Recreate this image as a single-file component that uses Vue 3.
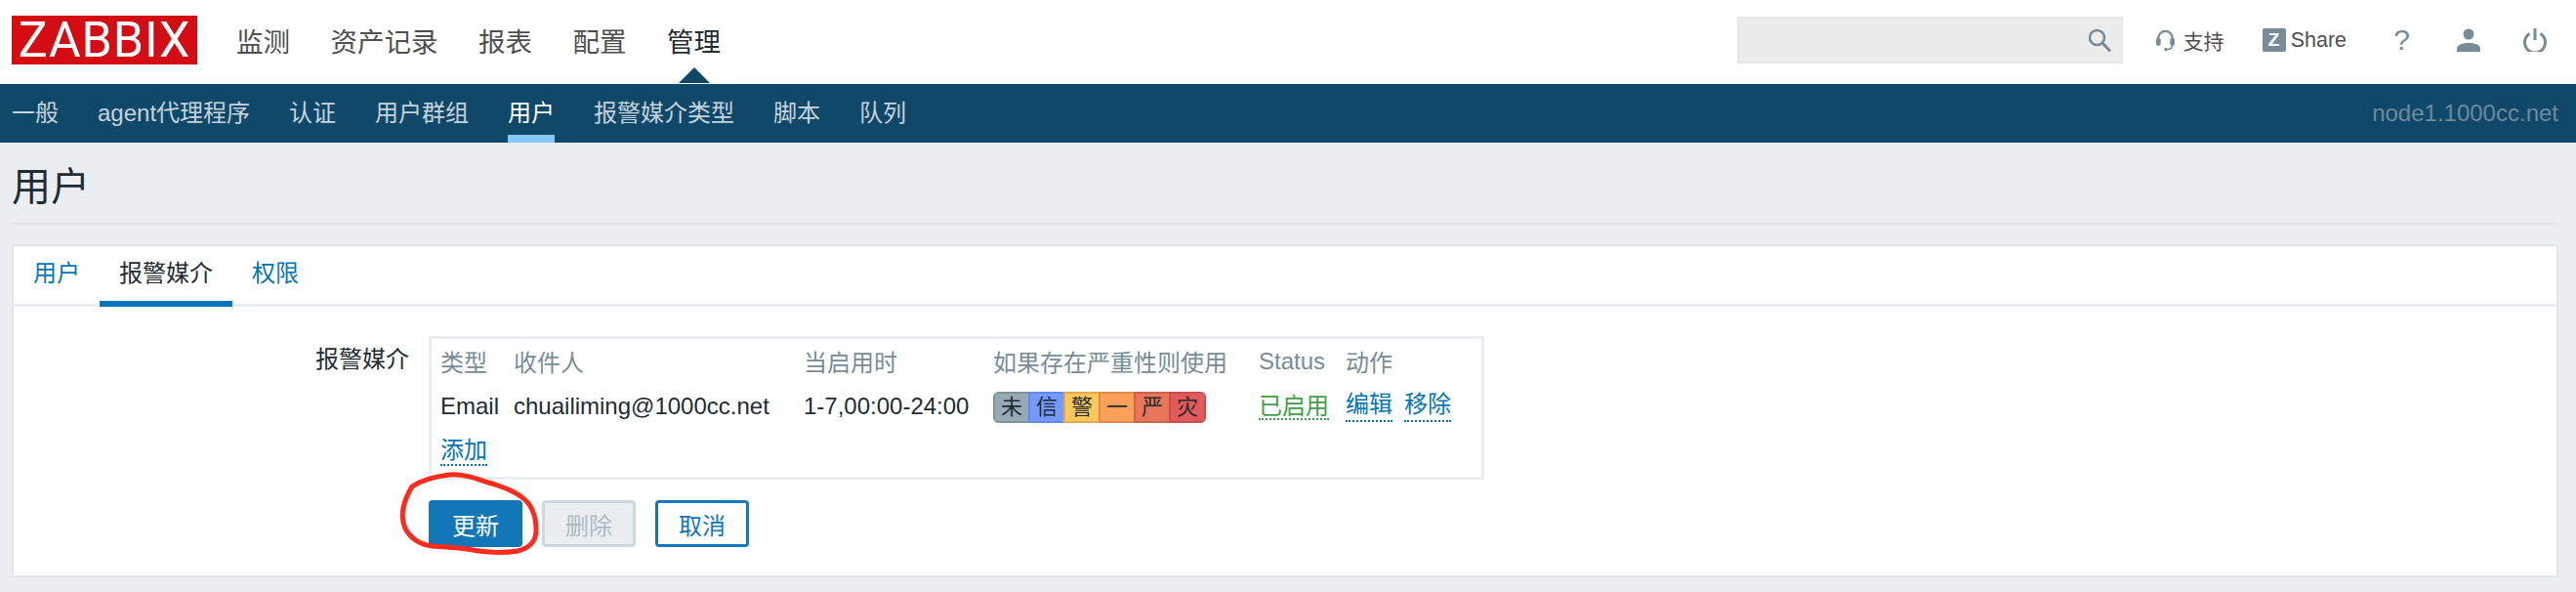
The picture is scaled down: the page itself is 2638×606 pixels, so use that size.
<template>
  <div class="page">
    <header class="top">
      <a class="logo">ZABBIX</a>
      <nav class="main-nav">
        <a v-for="item in mainNav" :key="item" :class="{ active: item === '管理' }">{{ item }}</a>
      </nav>
      <div class="tools">
        <div class="search">
          <svg class="search-icon" viewBox="0 0 24 24" width="24" height="24">
            <circle cx="9.5" cy="9.5" r="7.5" fill="none" stroke="#768d99" stroke-width="2.6" />
            <path d="M15 15l8 8.5" stroke="#768d99" stroke-width="3" fill="none" />
          </svg>
        </div>
        <a class="tool support">
          <svg viewBox="0 0 22 24" width="21" height="24">
            <path d="M3.5 14V10a7.5 7.5 0 0 1 15 0v4" fill="none" stroke="#768d99" stroke-width="2.4" />
            <rect x="1" y="10" width="5" height="8" rx="2" fill="#768d99" />
            <rect x="16" y="10" width="5" height="8" rx="2" fill="#768d99" />
            <path d="M18.5 17c0 3.5-2.5 5-6 5.200" fill="none" stroke="#768d99" stroke-width="1.800" />
            <circle cx="11.500" cy="22" r="1.800" fill="#768d99" />
          </svg>
          <span>支持</span>
        </a>
        <a class="tool share"><span class="z-icon">Z</span><span>Share</span></a>
        <a class="tool help">?</a>
        <a class="tool profile">
          <svg viewBox="0 0 24 24" width="24" height="24">
            <circle cx="12" cy="6" r="5.500" fill="#768d99" />
            <path d="M0 24v-3c0-4 5-6 12-6s12 2 12 6v3z" fill="#768d99" />
          </svg>
        </a>
        <a class="tool power">
          <svg viewBox="0 0 24 24" width="24" height="24">
            <path d="M6.500 5.500a10.500 10.500 0 1 0 11 0" fill="none" stroke="#768d99" stroke-width="3" />
            <path d="M12 0v12" stroke="#768d99" stroke-width="3" />
          </svg>
        </a>
      </div>
    </header>

    <nav class="sub-nav">
      <a v-for="item in subNav" :key="item" :class="{ active: item === '用户' }">{{ item }}</a>
      <span class="server">node1.1000cc.net</span>
    </nav>

    <main class="content">
      <h1 class="title">用户</h1>
      <section class="card">
        <div class="tabs">
          <a>用户</a>
          <a class="active">报警媒介</a>
          <a>权限</a>
        </div>
        <div class="form">
          <label class="form-label">报警媒介</label>
          <div class="form-field">
            <div class="media-box">
              <table class="media-table">
                <thead>
                  <tr>
                    <th class="col-type">类型</th>
                    <th class="col-to">收件人</th>
                    <th class="col-when">当启用时</th>
                    <th class="col-sev">如果存在严重性则使用</th>
                    <th class="col-status">Status</th>
                    <th>动作</th>
                  </tr>
                </thead>
                <tbody>
                  <tr class="media-row">
                    <td>Email</td>
                    <td>chuailiming@1000cc.net</td>
                    <td>1-7,00:00-24:00</td>
                    <td class="sev-cell">
                      <div class="severity">
                        <span v-for="s in severities" :key="s.label" :class="s.cls">{{ s.label }}</span>
                      </div>
                    </td>
                    <td><a class="dotted green">已启用</a></td>
                    <td class="actions"><a class="dotted">编辑</a><a class="dotted">移除</a></td>
                  </tr>
                  <tr>
                    <td colspan="6"><a class="dotted">添加</a></td>
                  </tr>
                </tbody>
              </table>
            </div>
            <div class="buttons">
              <button class="btn primary">更新</button>
              <button class="btn disabled">删除</button>
              <button class="btn outline">取消</button>
            </div>
          </div>
        </div>
      </section>
    </main>

    <svg class="scribble" viewBox="0 0 2638 606" width="2638" height="606">
      <path
        d="M422 498C431 492 444 488 460 486C476 485 488 490 500 494C515 498 528 503 537 511C545 518 549 530 549 543C549 553 543 561 530 564C518 566 505 566 490 564C475 561 460 560 442 559C428 557 420 550 415 541C411 532 412 520 416 510C418 505 420 501 422 498Z"
        fill="none"
        stroke="#fb2b1e"
        stroke-width="5"
      />
    </svg>
  </div>
</template>

<script setup>
const mainNav = ['监测', '资产记录', '报表', '配置', '管理']
const subNav = ['一般', 'agent代理程序', '认证', '用户群组', '用户', '报警媒介类型', '脚本', '队列']
const severities = [
  { label: '未', cls: 'sev-na' },
  { label: '信', cls: 'sev-info' },
  { label: '警', cls: 'sev-warn' },
  { label: '一', cls: 'sev-avg' },
  { label: '严', cls: 'sev-high' },
  { label: '灾', cls: 'sev-dis' }
]
</script>

<style>
html,
body {
  background: #ebeef0;
}
</style>

<style scoped>
.page {
  position: relative;
  width: 2638px;
  height: 606px;
  overflow: hidden;
  background: #ebeef0;
  color: #1f2c33;
  font-family: "Liberation Sans", "Noto Sans CJK SC", sans-serif;
  font-size: 24px;
}

.top {
  display: flex;
  align-items: center;
  height: 86px;
  padding: 0 30px 4px 12px;
  box-sizing: border-box;
  background: #fff;
}

.logo {
  width: 190px;
  height: 50px;
  background: #d40c13;
  color: #fff;
  font-family: Roboto, "Liberation Sans", sans-serif;
  font-size: 50px;
  letter-spacing: 1px;
  line-height: 50px;
  text-align: center;
}

.main-nav {
  display: flex;
  gap: 41.500px;
  margin-left: 40px;
  font-size: 27.500px;
  color: #4f4f4f;
}

.main-nav a {
  position: relative;
}

.main-nav .active {
  color: #1f2c33;
}

.main-nav .active::after {
  content: "";
  position: absolute;
  left: 12px;
  top: 48px;
  border-left: 16px solid transparent;
  border-right: 16px solid transparent;
  border-bottom: 16px solid #10486a;
}

.tools {
  display: flex;
  align-items: center;
  margin-left: auto;
  font-size: 21px;
  color: #4f4f4f;
}

.tool {
  display: flex;
  align-items: center;
  height: 24px;
}

.search {
  display: flex;
  align-items: center;
  justify-content: flex-end;
  width: 395px;
  height: 48px;
  box-sizing: border-box;
  padding-right: 10px;
  background: #ececec;
  border: 2px solid #e6e6e6;
}

.support {
  gap: 8px;
  margin-left: 33px;
}

.share {
  gap: 5px;
  margin-left: 39px;
  font-size: 21.500px;
}

.z-icon {
  width: 24px;
  height: 24px;
  border-radius: 2px;
  background: #768d99;
  color: #fff;
  font-size: 19px;
  font-weight: 700;
  line-height: 24px;
  text-align: center;
}

.help {
  justify-content: center;
  width: 13px;
  margin-left: 50px;
  color: #768d99;
  font-size: 30px;
}

.profile {
  margin-left: 50px;
}

.power {
  margin-left: 44px;
}

.sub-nav {
  display: flex;
  gap: 40px;
  height: 60px;
  padding: 0 18px 0 12px;
  background: #10486a;
  color: #c5d3db;
  line-height: 60px;
}

.sub-nav a {
  height: 60px;
  box-sizing: border-box;
}

.sub-nav .active {
  color: #fff;
  border-bottom: 8px solid #84c8f4;
}

.server {
  margin-left: auto;
  color: #6e8a9a;
}

.content {
  padding: 0 18px 15px 12px;
}

.title {
  height: 84px;
  margin: 0;
  box-sizing: border-box;
  border-bottom: 2px solid #dfe3e5;
  font-size: 40px;
  font-weight: 400;
  line-height: 54px;
  padding-top: 18px;
}

.card {
  height: 341px;
  box-sizing: border-box;
  margin-top: 20px;
  background: #fff;
  border: 2px solid #e3e6e8;
}

.tabs {
  display: flex;
  height: 62px;
  box-sizing: border-box;
  border-bottom: 3px solid #ebeef0;
  color: #0275b8;
}

.tabs a {
  height: 62px;
  padding: 0 20px;
  box-sizing: border-box;
  line-height: 56px;
}

.tabs .active {
  color: #1f2c33;
  border-bottom: 6px solid #0275b8;
}

.form {
  display: grid;
  grid-template-columns: 405px 1fr;
  column-gap: 20px;
  padding-top: 30px;
}

.form-label {
  padding-top: 10px;
  text-align: right;
  line-height: 28px;
}

.media-box {
  width: 1081px;
  height: 147px;
  box-sizing: border-box;
  padding: 2px 0 0 9px;
  border: 3px solid #ebeef0;
}

.media-table {
  border-collapse: collapse;
  table-layout: fixed;
}

.media-table th,
.media-table td {
  height: 45px;
  padding: 0;
  font-weight: 400;
  text-align: left;
  white-space: nowrap;
  vertical-align: middle;
}

.media-table th {
  padding-bottom: 4px;
  height: 41px;
  color: #768d99;
}

.media-table .media-row td {
  height: 43px;
  padding-bottom: 2px;
}

.media-table .media-row .sev-cell {
  height: 45px;
  padding-bottom: 0;
}

.col-type {
  width: 75px;
}

.col-to {
  width: 297px;
}

.col-when {
  width: 194px;
}

.col-sev {
  width: 272px;
}

.col-status {
  width: 89px;
}

.severity {
  display: flex;
  width: 218px;
  height: 32px;
  overflow: hidden;
  border-radius: 6px;
  font-size: 22px;
  line-height: 28px;
  text-align: center;
}

.severity span {
  flex: 1;
  box-sizing: border-box;
  border-style: solid;
  border-width: 2px 0 2px 2px;
}

.severity span:last-child {
  border-right-width: 2px;
}

.sev-na {
  background: #97aab3;
  border-color: #7f939c;
}

.sev-info {
  background: #7499ff;
  border-color: #6489ee;
}

.sev-warn {
  background: #ffc859;
  border-color: #e0a852;
}

.sev-avg {
  background: #ffa059;
  border-color: #dd8b55;
}

.sev-high {
  background: #e97659;
  border-color: #c9654e;
}

.sev-dis {
  background: #e45959;
  border-color: #c44e50;
}

.dotted {
  display: inline-block;
  color: #0275b8;
  line-height: 28px;
  border-bottom: 2px dotted #0275b8;
}

.green {
  color: #429e47;
  line-height: 24px;
  border-bottom-color: #429e47;
}

.actions .dotted {
  padding-bottom: 2px;
}

.actions .dotted + .dotted {
  margin-left: 12px;
}

.buttons {
  display: flex;
  gap: 20px;
  margin-top: 21px;
}

.btn {
  width: 96px;
  height: 48px;
  padding: 0;
  box-sizing: border-box;
  border: 3px solid #0275b8;
  border-radius: 4px;
  font-family: inherit;
  font-size: 24px;
}

.primary {
  background: #1276b7;
  border-color: #1276b7;
  color: #fff;
}

.disabled {
  background: #ebeef0;
  border-color: #cfd8dc;
  color: #acbbc2;
}

.outline {
  background: #fff;
  border-color: #1276b7;
  color: #1276b7;
}

.scribble {
  position: absolute;
  left: 0;
  top: 0;
  pointer-events: none;
}
</style>
